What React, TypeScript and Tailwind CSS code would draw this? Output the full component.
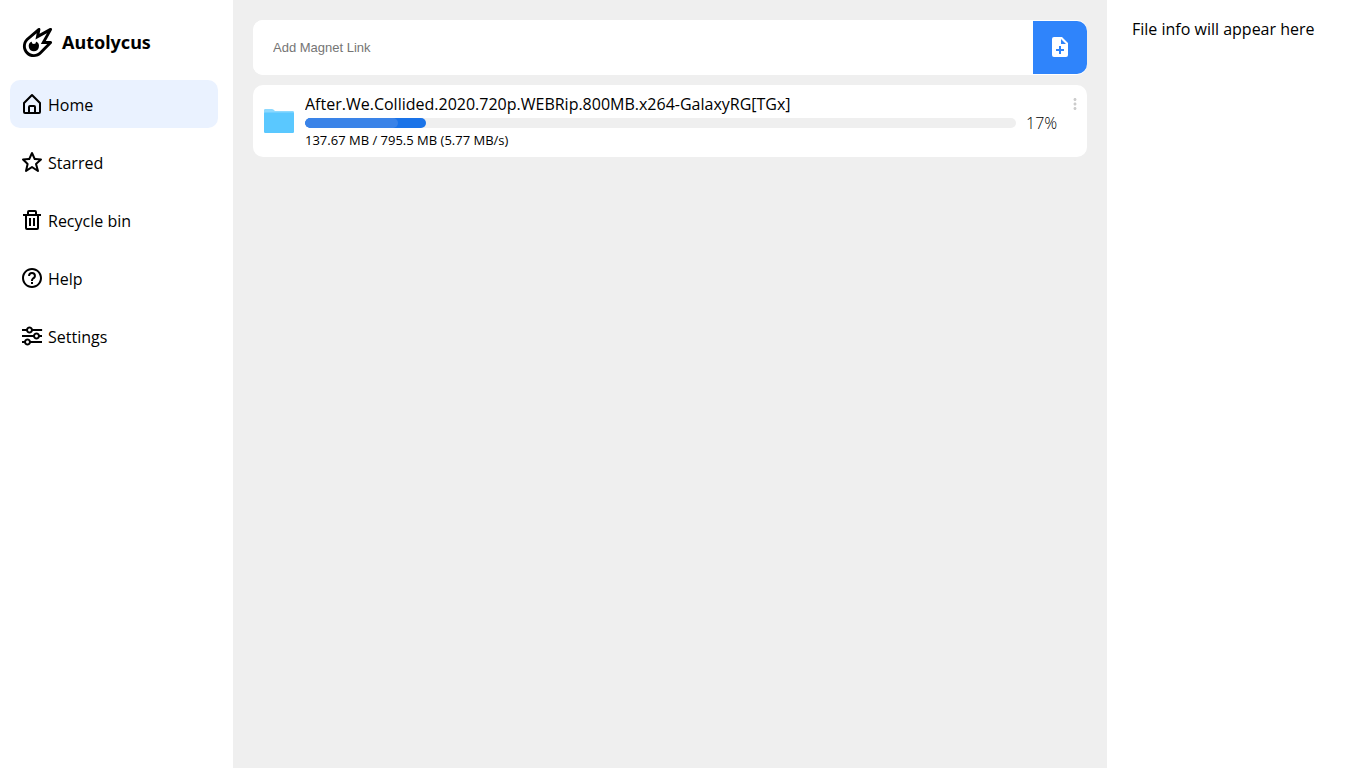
import type { CSSProperties, ReactNode } from "react";
import { BiDotsVerticalRounded, BiHelpCircle, BiMeteor, BiSliderAlt, BiSolidFilePlus, BiStar, BiTrash } from "react-icons/bi";

function HomeIcon() {
  return (
    <svg viewBox="0 0 24 24" className="size-6" fill="currentColor" aria-hidden="true">
      <path d="M5 22h14a2 2 0 0 0 2-2v-9a1 1 0 0 0-.29-.71l-8-8a1 1 0 0 0-1.41 0l-8 8A1 1 0 0 0 3 11v9a2 2 0 0 0 2 2zm5-2v-5h4v5zm-5-8.59 7-7 7 7V20h-3v-5a2 2 0 0 0-2-2h-4a2 2 0 0 0-2 2v5H5z" />
    </svg>
  );
}

function FolderIcon() {
  return (
    <svg viewBox="0 0 30 24" className="h-6 w-[30px] shrink-0" aria-hidden="true">
      <path d="M0 1.2Q0 0 1.2 0H8q.8 0 1.4.6L11 2h17.8Q30 2 30 3.2V22H0z" fill="#8cd9ff" />
      <path d="M0 4.2Q0 3.5.8 3.5H29.2q.8 0 .8.7V22.8q0 1.2-1.2 1.2H1.2Q0 24 0 22.800z" fill="#5ac8ff" />
    </svg>
  );
}

function NavItem({ icon, label, active = false }: { icon: ReactNode; label: string; active?: boolean }) {
  return (
    <a
      href="#"
      aria-current={active ? "page" : undefined}
      className={active ? "flex h-12 items-center gap-1 rounded-[10px] bg-[#eaf2ff] px-2.5" : "flex h-12 items-center gap-1 rounded-[10px] px-2.5"}
    >
      {icon}
      <span className="pt-0.5">{label}</span>
    </a>
  );
}

function Torrent({ name, progress, status }: { name: string; progress: number; status: string }) {
  const fill: CSSProperties = { width: `${progress}%` };
  return (
    <article className="flex h-[72px] items-center rounded-[10px] bg-white pl-[11px] pr-[3px]">
      <FolderIcon />
      <div className="ml-[11px] min-w-0 flex-1">
        <h2 className="truncate leading-5">{name}</h2>
        <div className="mt-1 h-2.5 overflow-hidden rounded-full bg-[#efefef]" role="progressbar" aria-valuenow={progress} aria-label={name}>
          <div className="h-full rounded-full bg-[#1a73e8]" style={fill}>
            <div className="h-full w-[77%] rounded-full bg-[#3a83e8]" />
          </div>
        </div>
        <p className="mt-1 text-[13px] leading-4">{status}</p>
      </div>
      <span className="ml-2.5 mt-1 w-10 font-light leading-5">{progress}%</span>
      <button aria-label="More options" className="mt-2.5 self-start text-[#ccc]">
        <BiDotsVerticalRounded size={18} />
      </button>
    </article>
  );
}

export default function App() {
  return (
    <div className="grid min-h-screen grid-cols-[233px_minmax(0,1fr)_253px] bg-[#efefef] font-['Open_Sans',sans-serif] text-[16px] leading-5 text-black">
      <aside className="bg-white pb-5 pl-2.5 pr-[15px] pt-6">
        <div className="flex h-9 items-center gap-[7px] pl-2.5">
          <BiMeteor size={35} className="shrink-0" />
          <h1 className="font-['Noto_Sans',sans-serif] text-[18px] font-bold leading-6">Autolycus</h1>
        </div>
        <nav className="mt-5 flex flex-col gap-2.5">
          <NavItem icon={<HomeIcon />} label="Home" active />
          <NavItem icon={<BiStar size={24} />} label="Starred" />
          <NavItem icon={<BiTrash size={24} />} label="Recycle bin" />
          <NavItem icon={<BiHelpCircle size={24} />} label="Help" />
          <NavItem icon={<BiSliderAlt size={24} />} label="Settings" />
        </nav>
      </aside>
      <main className="flex flex-col gap-2.5 p-5">
        <form className="flex h-[55px] items-center rounded-[10px] bg-white" onSubmit={(e) => e.preventDefault()}>
          <input
            type="text"
            aria-label="Add Magnet Link"
            placeholder="Add Magnet Link"
            className="h-full min-w-0 flex-1 rounded-l-[10px] bg-white px-5 font-['Liberation_Sans',sans-serif] text-[13px] outline-none placeholder:text-[#757575]"
          />
          <button type="submit" aria-label="Add torrent" className="flex h-[53px] w-[54px] items-center justify-center rounded-r-[10px] bg-[#2f84fb] pb-px text-white">
            <BiSolidFilePlus size={24} />
          </button>
        </form>
        <Torrent name="After.We.Collided.2020.720p.WEBRip.800MB.x264-GalaxyRG[TGx]" progress={17} status="137.67 MB / 795.5 MB (5.77 MB/s)" />
      </main>
      <aside className="bg-white px-[25px] pt-[19px]">
        <p>File info will appear here</p>
      </aside>
    </div>
  );
}
